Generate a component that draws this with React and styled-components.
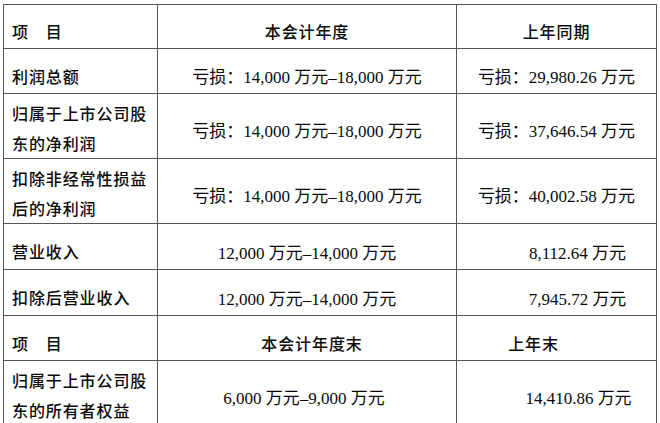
import React from 'react';
import styled, { createGlobalStyle } from 'styled-components';

const GlobalStyle = createGlobalStyle`
  html, body {
    margin: 0;
    padding: 0;
    background: #fff;
  }
`;

const Page = styled.div`
  width: 660px;
  height: 423px;
  padding: 4px 4px 0 3px;
  box-sizing: border-box;
  background: #fff;
`;

const Table = styled.table`
  width: 653px;
  border-collapse: collapse;
  table-layout: fixed;
  color: #0a0a0a;
`;

const Row = styled.tr`
  height: ${(p) => p.$h}px;
`;

const Cell = styled.td`
  border: 1px solid #555;
  vertical-align: middle;
  padding: 9px 0 0 0;
  box-sizing: border-box;
`;

const LabelCell = styled(Cell)`
  padding-left: 8px;
  font-family: "Noto Sans CJK SC", sans-serif;
  font-weight: 500;
  font-size: 16px;
  letter-spacing: 0.9px;
  line-height: 30px;
  padding-top: ${(p) => (p.$double ? 4 : 9)}px;
`;

const HeadCell = styled(Cell)`
  text-align: center;
  font-family: "Noto Sans CJK SC", sans-serif;
  font-weight: 500;
  font-size: 16px;
  letter-spacing: 0.9px;
  padding-left: ${(p) => (p.$shift > 0 ? p.$shift * 2 : 0)}px;
  padding-right: ${(p) => (p.$shift < 0 ? -p.$shift * 2 : 0)}px;
`;

const ValueCell = styled(Cell)`
  text-align: center;
  font-family: "Liberation Serif", "Noto Sans CJK SC", serif;
  font-size: 17px;
  white-space: nowrap;
  padding-left: ${(p) => (p.$shift > 0 ? p.$shift * 2 : 0)}px;
  padding-right: ${(p) => (p.$shift < 0 ? -p.$shift * 2 : 0)}px;
  padding-top: ${(p) => (p.$double ? 6 : 9)}px;
`;

const rows = [
  { h: 45, label: ['利润总额'], cur: '亏损：14,000 万元–18,000 万元', prev: '亏损：29,980.26 万元' },
  { h: 63, label: ['归属于上市公司股', '东的净利润'], cur: '亏损：14,000 万元–18,000 万元', prev: '亏损：37,646.54 万元' },
  { h: 63, label: ['扣除非经常性损益', '后的净利润'], cur: '亏损：14,000 万元–18,000 万元', prev: '亏损：40,002.58 万元' },
  { h: 46, label: ['营业收入'], cur: '12,000 万元–14,000 万元', prev: '8,112.64 万元', prevShift: 21 },
  { h: 46, label: ['扣除后营业收入'], cur: '12,000 万元–14,000 万元', prev: '7,945.72 万元', prevShift: 21 },
];

const Label = ({ lines }) => (
  <LabelCell $double={lines.length > 1}>
    {lines.map((l, i) => (
      <div key={i}>{l}</div>
    ))}
  </LabelCell>
);

const App = () => (
  <>
    <GlobalStyle />
    <Page>
      <Table>
        <colgroup>
          <col style={{ width: 154 }} />
          <col style={{ width: 299 }} />
          <col style={{ width: 200 }} />
        </colgroup>
        <tbody>
          <Row $h={44}>
            <Label lines={['项　目']} />
            <HeadCell>本会计年度</HeadCell>
            <HeadCell>上年同期</HeadCell>
          </Row>
          {rows.map((r, i) => (
            <Row key={i} $h={r.h}>
              <Label lines={r.label} />
              <ValueCell $double={r.label.length > 1}>{r.cur}</ValueCell>
              <ValueCell $double={r.label.length > 1} $shift={r.prevShift || 0}>
                {r.prev}
              </ValueCell>
            </Row>
          ))}
          <Row $h={45}>
            <Label lines={['项　目']} />
            <HeadCell $shift={5}>本会计年度末</HeadCell>
            <HeadCell $shift={-23}>上年末</HeadCell>
          </Row>
          <Row $h={62}>
            <Label lines={['归属于上市公司股', '东的所有者权益']} />
            <ValueCell $double $shift={-3}>6,000 万元–9,000 万元</ValueCell>
            <ValueCell $double $shift={22}>14,410.86 万元</ValueCell>
          </Row>
        </tbody>
      </Table>
    </Page>
  </>
);

export default App;
